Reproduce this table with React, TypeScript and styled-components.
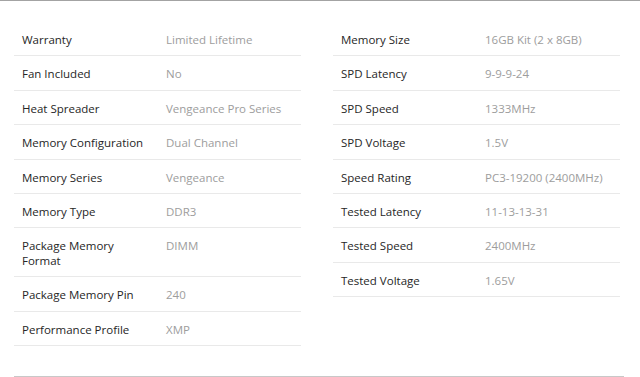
import * as React from 'react';
import styled, { createGlobalStyle } from 'styled-components';

const GlobalStyle = createGlobalStyle`
  html, body {
    margin: 0;
    padding: 0;
    background: #fff;
    font-family: "Open Sans", "Liberation Sans", sans-serif;
  }
`;

const Page = styled.div`
  width: 640px;
  height: 377px;
  box-sizing: border-box;
  border-top: 1px solid #a3a3a3;
  display: flex;
  flex-direction: column;
`;

const Specs = styled.div`
  display: grid;
  grid-template-columns: 287px 287px;
  column-gap: 32px;
  align-items: start;
  padding: 21px 0 0 14px;
  flex: 1;
`;

const Column = styled.div`
  display: flex;
  flex-direction: column;
`;

const Row = styled.div`
  display: grid;
  grid-template-columns: 144px 1fr;
  padding: 11px 8px 8px;
  border-bottom: 1px solid #e9e9e9;
  font-size: 11.5px;
  line-height: 14.4px;
`;

const Label = styled.span`
  color: #262626;
  padding-right: 18px;
`;

const Value = styled.span`
  color: #9d9d9d;
`;

const Footer = styled.div`
  margin: 0 16px 0 14px;
  border-top: 1px solid #c8c8c8;
`;

type Spec = [string, string];

const left: Spec[] = [
  ['Warranty', 'Limited Lifetime'],
  ['Fan Included', 'No'],
  ['Heat Spreader', 'Vengeance Pro Series'],
  ['Memory Configuration', 'Dual Channel'],
  ['Memory Series', 'Vengeance'],
  ['Memory Type', 'DDR3'],
  ['Package Memory Format', 'DIMM'],
  ['Package Memory Pin', '240'],
  ['Performance Profile', 'XMP'],
];

const right: Spec[] = [
  ['Memory Size', '16GB Kit (2 x 8GB)'],
  ['SPD Latency', '9-9-9-24'],
  ['SPD Speed', '1333MHz'],
  ['SPD Voltage', '1.5V'],
  ['Speed Rating', 'PC3-19200 (2400MHz)'],
  ['Tested Latency', '11-13-13-31'],
  ['Tested Speed', '2400MHz'],
  ['Tested Voltage', '1.65V'],
];

const SpecColumn = ({ specs }: { specs: Spec[] }) => (
  <Column>
    {specs.map(([label, value]) => (
      <Row key={label}>
        <Label>{label}</Label>
        <Value>{value}</Value>
      </Row>
    ))}
  </Column>
);

export default function App() {
  return (
    <>
      <GlobalStyle />
      <Page>
        <Specs>
          <SpecColumn specs={left} />
          <SpecColumn specs={right} />
        </Specs>
        <Footer />
      </Page>
    </>
  );
}
